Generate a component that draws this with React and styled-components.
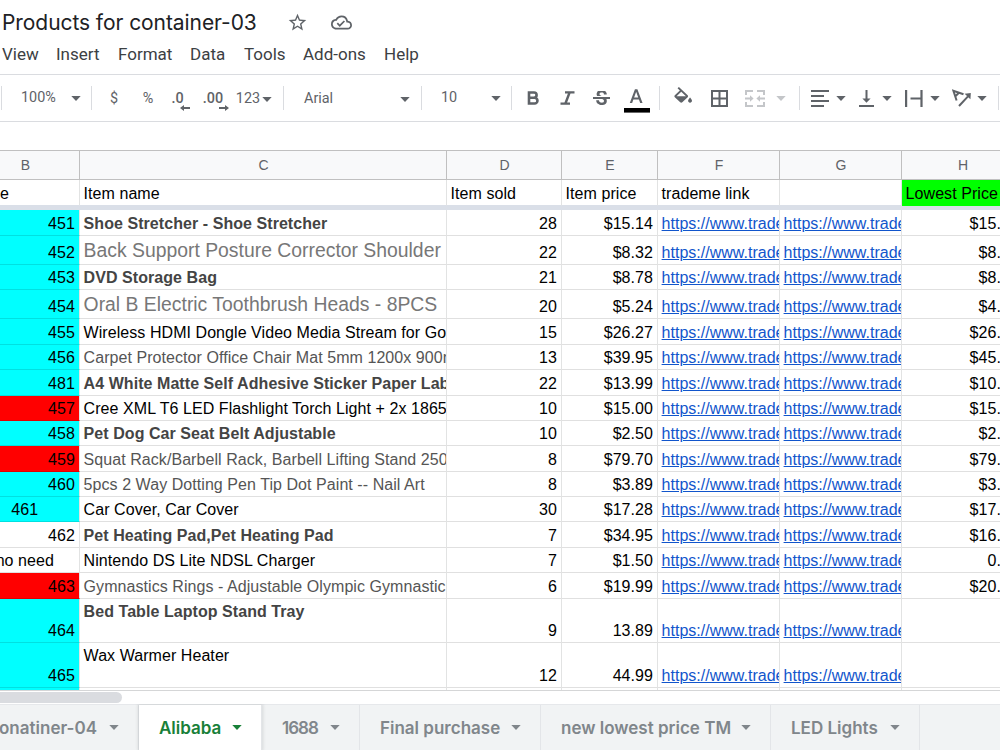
import React from "react";
import styled, { createGlobalStyle } from "styled-components";
import { MdStarBorder, MdOutlineCloudDone } from "react-icons/md";

const menus = [
  ["View", 54],
  ["Insert", 62],
  ["Format", 72],
  ["Data", 54],
  ["Tools", 59],
  ["Add-ons", 81],
  ["Help", 60],
];

const columns = [
  ["B", 109],
  ["C", 367],
  ["D", 115],
  ["E", 96],
  ["F", 122],
  ["G", 122],
  ["H", 122],
];

const cyan = "#00ffff";
const red = "#ff0000";
const link = "https://www.trade";

// id, id background, height, name, name style, sold, price, lowest
const products = [
  ["451", cyan, 26, "Shoe Stretcher - Shoe Stretcher", "bold", "28", "$15.14", "$15."],
  ["452", cyan, 29, "Back Support Posture Corrector Shoulder", "large", "22", "$8.32", "$8."],
  ["453", cyan, 25, "DVD Storage Bag", "bold", "21", "$8.78", "$8."],
  ["454", cyan, 29, "Oral B Electric Toothbrush Heads - 8PCS", "large", "20", "$5.24", "$4."],
  ["455", cyan, 26, "Wireless HDMI Dongle Video Media Stream for Go", "", "15", "$26.27", "$26."],
  ["456", cyan, 25, "Carpet Protector Office Chair Mat 5mm 1200x 900m", "grey", "13", "$39.95", "$45."],
  ["481", cyan, 26, "A4 White Matte Self Adhesive Sticker Paper Lab", "bold", "22", "$13.99", "$10."],
  ["457", red, 25, "Cree XML T6 LED Flashlight Torch Light + 2x 1865", "", "10", "$15.00", "$15."],
  ["458", cyan, 25, "Pet Dog Car Seat Belt Adjustable", "bold", "10", "$2.50", "$2."],
  ["459", red, 26, "Squat Rack/Barbell Rack, Barbell Lifting Stand 250", "grey", "8", "$79.70", "$79."],
  ["460", cyan, 25, "5pcs 2 Way Dotting Pen Tip Dot Paint -- Nail Art", "grey", "8", "$3.89", "$3."],
  ["461", cyan, 25, "Car Cover, Car Cover", "", "30", "$17.28", "$17."],
  ["462", "", 26, "Pet Heating Pad,Pet Heating Pad", "bold", "7", "$34.95", "$16."],
  ["no need", "", 25, "Nintendo DS Lite NDSL Charger", "", "7", "$1.50", "0."],
  ["463", red, 26, "Gymnastics Rings - Adjustable Olympic Gymnastic", "grey", "6", "$19.99", "$20."],
  ["464", cyan, 44, "Bed Table Laptop Stand Tray", "bold", "9", "13.89", ""],
  ["465", cyan, 45, "Wax Warmer Heater", "", "12", "44.99", ""],
];

const tabs = [
  ["onatiner-04", 139],
  ["Alibaba", 123],
  ["1688", 98],
  ["Final purchase", 181],
  ["new lowest price TM", 230],
  ["LED Lights", 149],
];

function Caret() {
  return (
    <svg width="10" height="5" viewBox="0 0 10 5" fill="currentColor">
      <path d="M0.3 0h9.4L5 5z" />
    </svg>
  );
}

function DecimalIcon({ text, right }) {
  return (
    <Decimal>
      {text}
      <DecimalArrow width="10" height="6" viewBox="0 0 10 6" fill="currentColor">
        <path d={right ? "M0 2.1h6V0l4 3-4 3V3.9H0z" : "M10 2.1H4V0L0 3l4 3V3.9h6z"} />
      </DecimalArrow>
    </Decimal>
  );
}

function Toolbar() {
  return (
    <ToolbarRow>
      <Divider />
      <Select $w={89} $left={19} $right={10}>
        100% <Caret />
      </Select>
      <Divider />
      <Tool $w={44} $drop={2}>$</Tool>
      <Tool $w={24} $drop={2}>%</Tool>
      <Tool $w={35} $drop={2}>
        <DecimalIcon text=".0" />
      </Tool>
      <Tool $w={36} $drop={2}>
        <DecimalIcon text=".00" right />
      </Tool>
      <Tool $w={46} $gap={2} $drop={2}>
        123 <Caret />
      </Tool>
      <Spacer $w={6} />
      <Divider />
      <Select $w={137} $left={20} $right={11} $drop={2}>
        Arial <Caret />
      </Select>
      <Divider />
      <Select $w={89} $left={19} $right={10}>
        10 <Caret />
      </Select>
      <Divider />
      <Tool $w={42}>
        <svg width="13" height="14" viewBox="0 0 13 14" fill="none" stroke="currentColor" strokeWidth="2.6">
          <path d="M2 1.5h5a2.6 2.6 0 0 1 0 5.2H2zM2 6.8h5.6a2.8 2.8 0 0 1 0 5.7H2z" />
        </svg>
      </Tool>
      <Tool $w={26}>
        <svg width="15" height="14" viewBox="0 0 15 14" fill="none" stroke="currentColor" strokeWidth="2.4">
          <path d="M5 1.4h9.5M.5 12.6H10M9.6 1.5 5.4 12.5" />
        </svg>
      </Tool>
      <Tool $w={42}>
        <svg width="17" height="15" viewBox="3 4 18 15" preserveAspectRatio="none" fill="currentColor">
          <path d="M7.24 8.75c-.26-.48-.39-1.03-.39-1.67 0-.61.13-1.16.4-1.67.26-.5.63-.93 1.11-1.29.48-.35 1.05-.63 1.7-.83.66-.19 1.39-.29 2.18-.29.81 0 1.54.11 2.21.34.66.22 1.23.54 1.69.94.47.4.83.88 1.08 1.43s.38 1.15.38 1.81h-3.01c0-.31-.05-.59-.15-.85-.09-.27-.24-.49-.44-.68-.2-.19-.45-.33-.75-.44-.3-.1-.66-.16-1.06-.16-.39 0-.74.04-1.03.13s-.53.21-.72.36c-.19.16-.34.34-.44.55-.1.21-.15.43-.15.66 0 .48.25.88.74 1.21.38.25.77.48 1.41.7H7.39c-.05-.08-.11-.17-.15-.25zM21 12v-2H3v2h9.62c.18.07.4.14.55.2.37.17.66.34.87.51s.35.36.43.57c.07.2.11.43.11.69 0 .23-.05.45-.14.66-.09.2-.23.38-.42.53-.19.15-.42.26-.71.35-.29.08-.63.13-1.01.13-.43 0-.83-.04-1.18-.13s-.66-.23-.91-.42c-.25-.19-.45-.44-.59-.75s-.25-.76-.25-1.21H6.4c0 .55.08 1.13.24 1.58s.37.85.65 1.21c.28.35.6.66.98.92.37.26.78.48 1.22.65.44.17.9.3 1.38.39.48.08.96.13 1.44.13.8 0 1.53-.09 2.18-.28s1.21-.45 1.67-.79c.46-.34.82-.77 1.07-1.27s.38-1.07.38-1.71c0-.6-.1-1.14-.31-1.61-.05-.11-.11-.23-.17-.33H21z" />
        </svg>
      </Tool>
      <Tool $w={29} $drop={5}>
        <svg width="26" height="24" viewBox="0 0 26 24">
          <path
            transform="translate(.4 -2.6) scale(.98)"
            fill="currentColor"
            d="M5.49 17h2.42l1.27-3.58h5.65L16.09 17h2.42L13.25 3h-2.5zm4.42-5.61 2.03-5.79h.12l2.03 5.79z"
          />
          <path d="M0 19h26v4.6H0z" fill="#000" />
        </svg>
      </Tool>
      <Spacer $w={8} />
      <Divider />
      <Tool $w={46} $drop={-6}>
        <svg width="18" height="16" viewBox="2.6 0 18.4 17.4" preserveAspectRatio="none" fill="currentColor">
          <path d="M16.56 8.94 7.62 0 6.21 1.41l2.38 2.38-5.15 5.15c-.59.59-.59 1.54 0 2.12l5.5 5.5c.29.29.68.44 1.06.44s.77-.15 1.06-.44l5.5-5.5c.59-.58.59-1.53 0-2.12zM5.21 10 10 5.21 14.79 10H5.21zM19 11.5s-2 2.17-2 3.5c0 1.1.9 2 2 2s2-.9 2-2c0-1.33-2-3.5-2-3.5z" />
        </svg>
      </Tool>
      <Tool $w={26}>
        <svg width="17" height="17" viewBox="0 0 17 17" fill="none" stroke="currentColor" strokeWidth="2">
          <path d="M1 1h15v15H1zM8.5 1v15M1 8.5h15" />
        </svg>
      </Tool>
      <Tool $w={67} $gap={11} $faded>
        <svg width="20" height="17" viewBox="0 0 20 17" fill="none" stroke="currentColor" strokeWidth="2">
          <path d="M1 5V1h7M12 1h7v4M1 12v4h7M12 16h7v-4M0 8.5h6M14 8.5h6" />
          <path d="M5 5.2 8.6 8.5 5 11.8zM15 5.2 11.4 8.5 15 11.8z" fill="currentColor" stroke="none" />
        </svg>
        <Caret />
      </Tool>
      <Divider />
      <Tool $w={56} $gap={7}>
        <svg width="18" height="17" viewBox="0 0 18 17" stroke="currentColor" strokeWidth="2">
          <path d="M0 1h18M0 6h13M0 11h18M0 16h13" />
        </svg>
        <Caret />
      </Tool>
      <Tool $w={38} $gap={8}>
        <svg width="15" height="17" viewBox="0 0 15 17" stroke="currentColor" strokeWidth="2">
          <path d="M0 16h15M7.5 0v9" />
          <path d="M3.4 8.4h8.2L7.5 12.8z" fill="currentColor" stroke="none" />
        </svg>
        <Caret />
      </Tool>
      <Tool $w={56} $gap={7}>
        <svg width="18" height="17" viewBox="0 0 18 17" stroke="currentColor" strokeWidth="2.2">
          <path d="M1.1 0v17M16.5 0v17M5.5 8.5H16" />
        </svg>
        <Caret />
      </Tool>
      <Tool $w={38} $gap={6}>
        <svg width="19" height="18" viewBox="0 0 19 18" fill="none" stroke="currentColor" strokeWidth="2">
          <path d="M4.6 11.5 1.4 1.8 11.5 5.2M3.4 7.2 7.2 3.6M7 17 16 7.4" />
          <path d="M12.6 4.8 18.8 4l-.4 6.2z" fill="currentColor" stroke="none" />
        </svg>
        <Caret />
      </Tool>
      <Spacer $w={10} />
      <Divider />
    </ToolbarRow>
  );
}

function ProductRow({ product }) {
  const [id, color, height, name, look, sold, price, lowest] = product;
  const tall = height > 40;
  const centered = id === "461" || id === "no need";

  return (
    <Row $h={height}>
      <Cell $w={109} $bg={color} $align={centered ? "center" : "right"}>
        {id}
      </Cell>
      <Cell $w={367} $look={look} $top={tall}>
        {name}
      </Cell>
      <Cell $w={115} $align="right">{sold}</Cell>
      <Cell $w={96} $align="right">{price}</Cell>
      <Cell $w={122}><Url>{link}</Url></Cell>
      <Cell $w={122}><Url>{link}</Url></Cell>
      <Cell $w={122} $align="right" $end={22}>{lowest}</Cell>
    </Row>
  );
}

function App() {
  return (
    <Page>
      <GlobalStyle />
      <TitleBar>
        <Title>Products for container-03</Title>
        <MdStarBorder size={21} />
        <MdOutlineCloudDone size={21} />
      </TitleBar>
      <MenuBar>
        {menus.map(([label, width]) => (
          <MenuItem key={label} $w={width}>{label}</MenuItem>
        ))}
      </MenuBar>
      <Toolbar />
      <FormulaBar />
      <Grid>
        <ColumnHeads>
          {columns.map(([label, width]) => (
            <ColumnHead key={label} $w={width}>{label}</ColumnHead>
          ))}
        </ColumnHeads>
        <FrozenRow>
          <Cell $w={109} $start={29}>e</Cell>
          <Cell $w={367}>Item name</Cell>
          <Cell $w={115}>Item sold</Cell>
          <Cell $w={96}>Item price</Cell>
          <Cell $w={122}>trademe link</Cell>
          <Cell $w={122} />
          <Cell $w={122} $bg="#00ff00">Lowest Price</Cell>
        </FrozenRow>
        <FrozenBar />
        {products.map((product) => (
          <ProductRow key={product[0]} product={product} />
        ))}
        <Row $h={2}>
          {columns.map(([label, width]) => (
            <EmptyCell key={label} $w={width} $bg={label === "B" ? cyan : "#fff"} />
          ))}
        </Row>
      </Grid>
      <ScrollArea>
        <ScrollThumb />
      </ScrollArea>
      <TabBar>
        {tabs.map(([label, width]) => (
          <Tab key={label} $w={width} $active={label === "Alibaba"}>
            <TabLabel $tight={label === "1688"}>{label}</TabLabel>
            <Caret />
          </Tab>
        ))}
      </TabBar>
    </Page>
  );
}

const GlobalStyle = createGlobalStyle`
  * {
    box-sizing: border-box;
  }
  body {
    margin: 0;
    background: #fff;
  }
  svg {
    display: block;
    flex-shrink: 0;
  }
`;

const Page = styled.main`
  width: 1000px;
  height: 750px;
  overflow: hidden;
  display: flex;
  flex-direction: column;
  background: #fff;
  font-family: "Liberation Sans", Arial, sans-serif;
`;

const TitleBar = styled.header`
  height: 43px;
  padding: 1px 0 0 2px;
  display: flex;
  align-items: center;
  color: #5f6368;

  svg + svg {
    margin-left: 23px;
  }
`;

const Title = styled.h1`
  margin: 0;
  width: 285px;
  font: 400 21px Inter, sans-serif;
  letter-spacing: -0.07px;
  color: #202124;
  white-space: nowrap;
`;

const MenuBar = styled.nav`
  height: 31px;
  padding-left: 2px;
  display: flex;
  font: 17px/22px Roboto, sans-serif;
  color: #3c4043;
`;

const MenuItem = styled.span`
  width: ${(p) => p.$w}px;
`;

const ToolbarRow = styled.div`
  height: 48px;
  padding-left: 1px;
  border-top: 1px solid #dadce0;
  border-bottom: 1px solid #dadce0;
  display: flex;
  align-items: center;
  overflow: hidden;
  font: 14.4px/20px Roboto, sans-serif;
  color: #5f6368;
`;

const Divider = styled.i`
  flex: 0 0 1px;
  height: 24px;
  background: #dadce0;
`;

const Spacer = styled.i`
  flex: 0 0 ${(p) => p.$w}px;
`;

const Tool = styled.div`
  flex: 0 0 ${(p) => p.$w}px;
  display: flex;
  align-items: center;
  justify-content: center;
  gap: ${(p) => p.$gap || 0}px;
  margin-top: ${(p) => p.$drop || 0}px;
  color: ${(p) => (p.$faded ? "#c4c6c9" : "inherit")};
`;

const Select = styled(Tool)`
  justify-content: space-between;
  padding: 0 ${(p) => p.$right}px 0 ${(p) => p.$left}px;
`;

const Decimal = styled.span`
  position: relative;
  font-weight: 500;
`;

const DecimalArrow = styled.svg`
  position: absolute;
  right: -6px;
  bottom: -2px;
`;

const FormulaBar = styled.div`
  height: 28px;
`;

const Grid = styled.section`
  height: 541px;
  overflow: hidden;
  border-top: 1px solid #c0c0c0;
  border-bottom: 1px solid #d5d6d7;
`;

const ColumnHeads = styled.div`
  display: flex;
  width: 1053px;
  height: 29px;
  margin-left: -29px;
  background: #f8f9fa;
`;

const ColumnHead = styled.div`
  width: ${(p) => p.$w}px;
  padding-left: 1px;
  border-right: 1px solid #c0c0c0;
  border-bottom: 1px solid #c0c0c0;
  font: 14px/28px "Liberation Sans", Arial, sans-serif;
  color: #5f6368;
  text-align: center;
`;

const Row = styled.div`
  display: flex;
  width: 1053px;
  height: ${(p) => p.$h}px;
  margin-left: -29px;
`;

const FrozenRow = styled(Row)`
  height: 26px;
`;

const FrozenBar = styled.div`
  height: 4px;
  background: #dadfe8;
`;

const looks = {
  bold: "font-weight: bold; color: #444;",
  grey: "color: #555;",
  large: "font-size: 19.36px; letter-spacing: 0; color: #777; padding-bottom: 5px;",
};

const Cell = styled.div`
  width: ${(p) => p.$w}px;
  height: 100%;
  padding: 4px ${(p) => p.$end || 4}px 2px ${(p) => p.$start || 3.6}px;
  display: flex;
  align-items: ${(p) => (p.$top ? "flex-start" : "flex-end")};
  justify-content: ${(p) => ({ right: "flex-end", center: "center" })[p.$align] || "flex-start"};
  overflow: hidden;
  white-space: pre;
  font-size: 16px;
  line-height: 18px;
  letter-spacing: 0.06px;
  color: #000;
  background: ${(p) => p.$bg || "#fff"};
  border-right: 1px solid #e2e3e3;
  border-bottom: 1px solid rgba(0, 0, 0, 0.12);
  ${(p) => looks[p.$look]}

  ${FrozenRow} & {
    border-bottom-color: ${(p) => (p.$bg ? "transparent" : "#dadfe8")};
  }
`;

const EmptyCell = styled.div`
  width: ${(p) => p.$w}px;
  background: ${(p) => p.$bg};
  border-right: 1px solid #e2e3e3;
`;

const Url = styled.span`
  letter-spacing: 0.01px;
  color: #1155cc;
  text-decoration: underline;
`;

const ScrollArea = styled.div`
  height: 13px;
  padding-top: 1px;
`;

const ScrollThumb = styled.div`
  width: 122px;
  height: 11px;
  border-radius: 0 6px 6px 0;
  background: #dadce0;
`;

const TabBar = styled.footer`
  flex: 1;
  display: flex;
  border-top: 1px solid #e6e8eb;
  background: #f1f3f4;
`;

const Tab = styled.div`
  width: ${(p) => p.$w}px;
  padding: 0 19px 0 20px;
  display: flex;
  align-items: center;
  justify-content: space-between;
  border-right: 1px solid #e3e5e8;
  color: ${(p) => (p.$active ? "#188038" : "#80868b")};
  background: ${(p) => (p.$active ? "#fff" : "none")};
  box-shadow: ${(p) => (p.$active ? "0 0 3px 1px rgba(60, 64, 67, 0.15)" : "none")};
  clip-path: ${(p) => (p.$active ? "inset(-1px -4px 0)" : "none")};

  &:first-child {
    justify-content: flex-end;
    gap: 12px;
  }
`;

const TabLabel = styled.span`
  font: 600 17px/20px Inter, sans-serif;
  letter-spacing: ${(p) => (p.$tight ? "-1px" : "0")};
  white-space: nowrap;
`;

export default App;
